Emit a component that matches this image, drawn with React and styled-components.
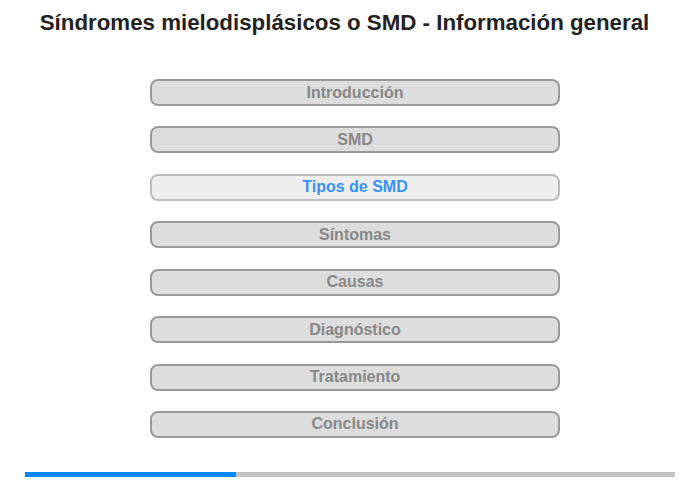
import styled, { createGlobalStyle } from 'styled-components';

const GlobalStyle = createGlobalStyle`
  html, body {
    margin: 0;
    padding: 0;
    background: #ffffff;
  }
  body {
    font-family: "Liberation Sans", Arial, sans-serif;
  }
`;

const Page = styled.div`
  width: 700px;
  height: 480px;
  display: flex;
  flex-direction: column;
  box-sizing: border-box;
`;

const Title = styled.h1`
  margin: 0;
  padding: 10px 11px 0 0;
  height: 40px;
  box-sizing: border-box;
  font-size: 22.3px;
  line-height: 26px;
  font-weight: bold;
  color: #222222;
  text-align: center;
`;

const Menu = styled.ul`
  list-style: none;
  margin: 39px 0 0 150px;
  padding: 0;
  width: 410px;
  display: flex;
  flex-direction: column;
  gap: 20.43px;
`;

const Item = styled.li`
  height: 27px;
  box-sizing: border-box;
  border: 2px solid ${p => (p.$active ? '#bcbcbc' : '#999999')};
  border-radius: 8px;
  background: ${p => (p.$active ? '#eeeeee' : '#dddddd')};
  color: ${p => (p.$active ? '#3392ff' : '#888888')};
  font-size: 16px;
  font-weight: bold;
  display: flex;
  align-items: center;
  justify-content: center;
  cursor: pointer;
`;

const Progress = styled.div`
  margin: 34px 0 0 25px;
  width: 650px;
  height: 5px;
  background: #c2c2c2;
  display: flex;
`;

const ProgressFill = styled.div`
  height: 100%;
  background: #0088ff;
`;

const items = [
  'Introducción',
  'SMD',
  'Tipos de SMD',
  'Síntomas',
  'Causas',
  'Diagnóstico',
  'Tratamiento',
  'Conclusión',
];

export default function App() {
  const current = 2;
  return (
    <>
      <GlobalStyle />
      <Page>
        <Title>Síndromes mielodisplásicos o SMD - Información general</Title>
        <Menu>
          {items.map((label, idx) => (
            <Item key={label} $active={idx === current}>
              {label}
            </Item>
          ))}
        </Menu>
        <Progress>
          <ProgressFill style={{ width: `${(211 / 650) * 100}%` }} />
        </Progress>
      </Page>
    </>
  );
}
